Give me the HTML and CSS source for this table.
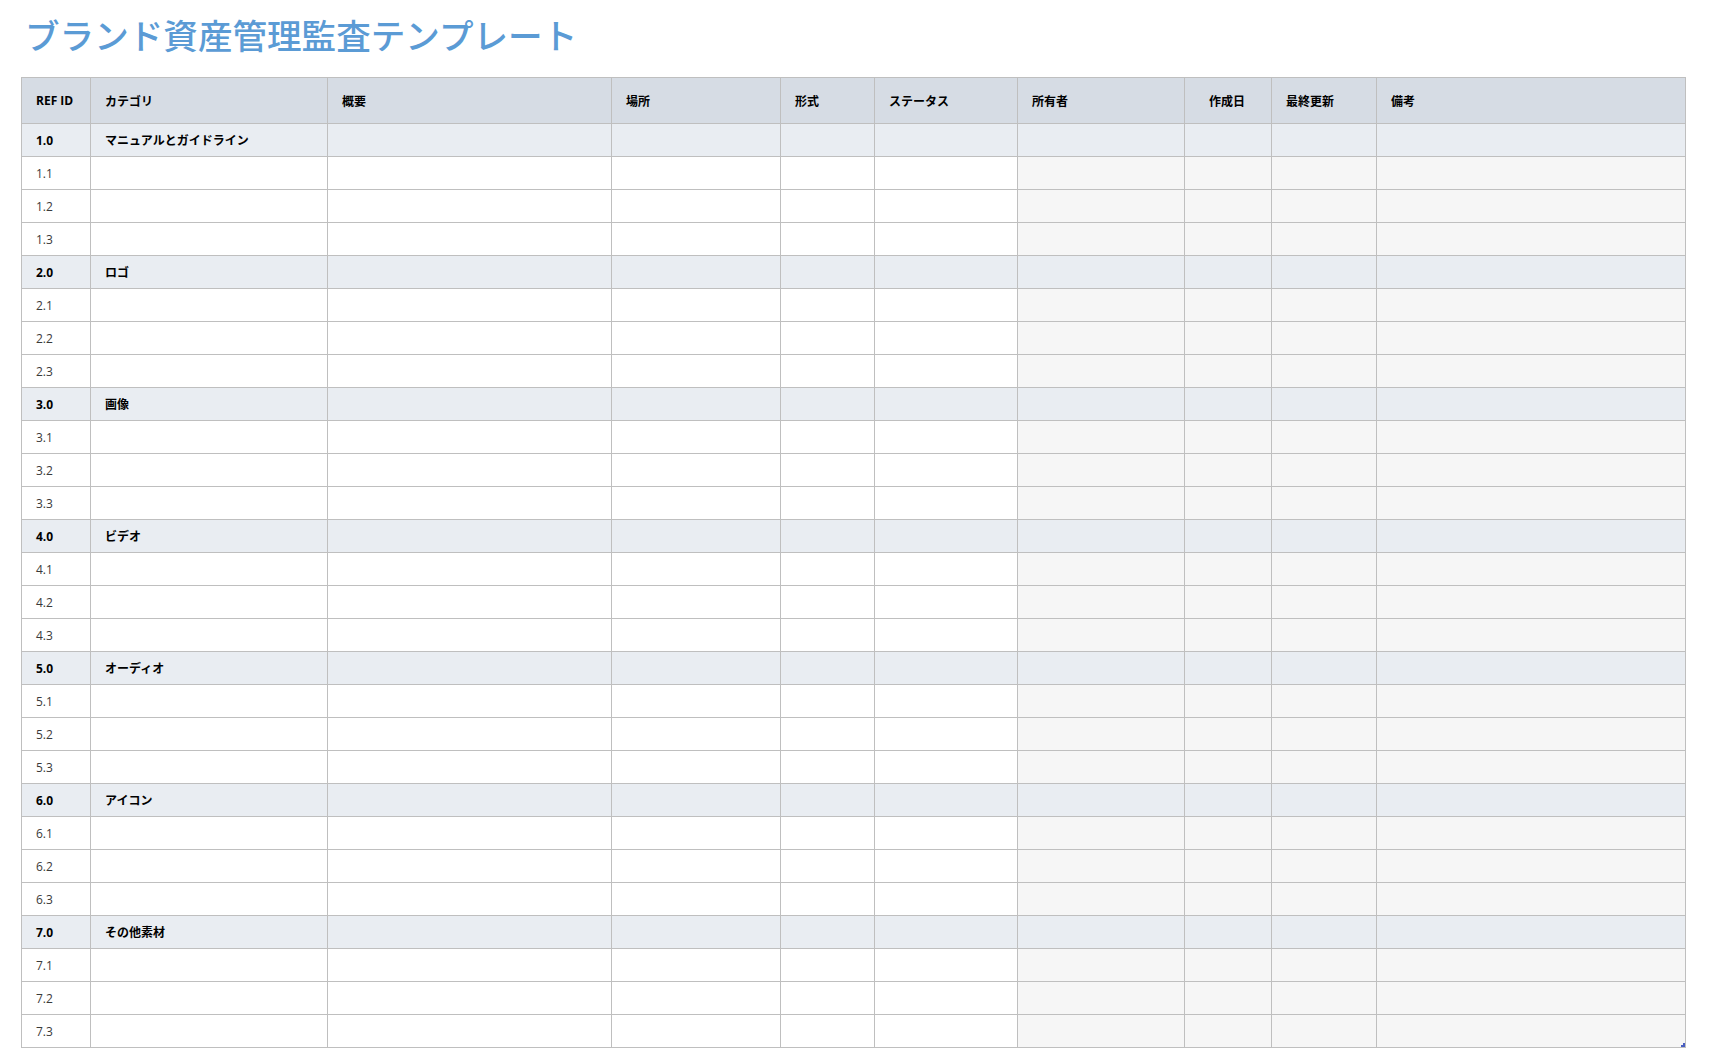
FILE: index.html
```html
<!DOCTYPE html>
<html lang="ja">
<head>
<meta charset="utf-8">
<title>ブランド資産管理監査テンプレート</title>
<link rel="stylesheet" href="styles.css">
</head>
<body>
<div class="page">
  <h1 class="title">ブランド資産管理監査テンプレート</h1>
  <table class="audit">
    <colgroup>
      <col class="c-id"><col class="c-cat"><col class="c-sum"><col class="c-loc"><col class="c-fmt">
      <col class="c-st"><col class="c-own"><col class="c-cre"><col class="c-upd"><col class="c-note">
    </colgroup>
    <thead>
      <tr>
        <th>REF ID</th><th>カテゴリ</th><th>概要</th><th>場所</th><th>形式</th>
        <th>ステータス</th><th>所有者</th><th class="center">作成日</th><th>最終更新</th><th>備考</th>
      </tr>
    </thead>
    <tbody>
      <tr class="group"><td>1.0</td><td>マニュアルとガイドライン</td><td></td><td></td><td></td><td></td><td></td><td></td><td></td><td></td></tr>
      <tr><td>1.1</td><td></td><td></td><td></td><td></td><td></td><td class="g"></td><td class="g"></td><td class="g"></td><td class="g"></td></tr>
      <tr><td>1.2</td><td></td><td></td><td></td><td></td><td></td><td class="g"></td><td class="g"></td><td class="g"></td><td class="g"></td></tr>
      <tr><td>1.3</td><td></td><td></td><td></td><td></td><td></td><td class="g"></td><td class="g"></td><td class="g"></td><td class="g"></td></tr>
      <tr class="group"><td>2.0</td><td>ロゴ</td><td></td><td></td><td></td><td></td><td></td><td></td><td></td><td></td></tr>
      <tr><td>2.1</td><td></td><td></td><td></td><td></td><td></td><td class="g"></td><td class="g"></td><td class="g"></td><td class="g"></td></tr>
      <tr><td>2.2</td><td></td><td></td><td></td><td></td><td></td><td class="g"></td><td class="g"></td><td class="g"></td><td class="g"></td></tr>
      <tr><td>2.3</td><td></td><td></td><td></td><td></td><td></td><td class="g"></td><td class="g"></td><td class="g"></td><td class="g"></td></tr>
      <tr class="group"><td>3.0</td><td>画像</td><td></td><td></td><td></td><td></td><td></td><td></td><td></td><td></td></tr>
      <tr><td>3.1</td><td></td><td></td><td></td><td></td><td></td><td class="g"></td><td class="g"></td><td class="g"></td><td class="g"></td></tr>
      <tr><td>3.2</td><td></td><td></td><td></td><td></td><td></td><td class="g"></td><td class="g"></td><td class="g"></td><td class="g"></td></tr>
      <tr><td>3.3</td><td></td><td></td><td></td><td></td><td></td><td class="g"></td><td class="g"></td><td class="g"></td><td class="g"></td></tr>
      <tr class="group"><td>4.0</td><td>ビデオ</td><td></td><td></td><td></td><td></td><td></td><td></td><td></td><td></td></tr>
      <tr><td>4.1</td><td></td><td></td><td></td><td></td><td></td><td class="g"></td><td class="g"></td><td class="g"></td><td class="g"></td></tr>
      <tr><td>4.2</td><td></td><td></td><td></td><td></td><td></td><td class="g"></td><td class="g"></td><td class="g"></td><td class="g"></td></tr>
      <tr><td>4.3</td><td></td><td></td><td></td><td></td><td></td><td class="g"></td><td class="g"></td><td class="g"></td><td class="g"></td></tr>
      <tr class="group"><td>5.0</td><td>オーディオ</td><td></td><td></td><td></td><td></td><td></td><td></td><td></td><td></td></tr>
      <tr><td>5.1</td><td></td><td></td><td></td><td></td><td></td><td class="g"></td><td class="g"></td><td class="g"></td><td class="g"></td></tr>
      <tr><td>5.2</td><td></td><td></td><td></td><td></td><td></td><td class="g"></td><td class="g"></td><td class="g"></td><td class="g"></td></tr>
      <tr><td>5.3</td><td></td><td></td><td></td><td></td><td></td><td class="g"></td><td class="g"></td><td class="g"></td><td class="g"></td></tr>
      <tr class="group"><td>6.0</td><td>アイコン</td><td></td><td></td><td></td><td></td><td></td><td></td><td></td><td></td></tr>
      <tr><td>6.1</td><td></td><td></td><td></td><td></td><td></td><td class="g"></td><td class="g"></td><td class="g"></td><td class="g"></td></tr>
      <tr><td>6.2</td><td></td><td></td><td></td><td></td><td></td><td class="g"></td><td class="g"></td><td class="g"></td><td class="g"></td></tr>
      <tr><td>6.3</td><td></td><td></td><td></td><td></td><td></td><td class="g"></td><td class="g"></td><td class="g"></td><td class="g"></td></tr>
      <tr class="group"><td>7.0</td><td>その他素材</td><td></td><td></td><td></td><td></td><td></td><td></td><td></td><td></td></tr>
      <tr><td>7.1</td><td></td><td></td><td></td><td></td><td></td><td class="g"></td><td class="g"></td><td class="g"></td><td class="g"></td></tr>
      <tr><td>7.2</td><td></td><td></td><td></td><td></td><td></td><td class="g"></td><td class="g"></td><td class="g"></td><td class="g"></td></tr>
      <tr><td>7.3</td><td></td><td></td><td></td><td></td><td></td><td class="g"></td><td class="g"></td><td class="g"></td><td class="g last"><span class="grip"></span></td></tr>
    </tbody>
  </table>
</div>
</body>
</html>
```

FILE: styles.css
```css
html, body {
  margin: 0;
  padding: 0;
  background: #ffffff;
}

body {
  font-family: "Open Sans", "Noto Sans CJK JP", sans-serif;
  color: #000000;
}

.page {
  padding: 17px 0 0 21px;
}

.title {
  margin: 0;
  padding-left: 4px;
  font-family: "Noto Sans CJK JP", sans-serif;
  font-size: 34.6px;
  line-height: 34px;
  font-weight: 500;
  color: #5b9bd5;
  letter-spacing: 0;
}

.audit {
  margin-top: 26px;
  width: 1665px;
  table-layout: fixed;
  border-collapse: separate;
  border-spacing: 0;
  border-left: 1px solid #bfbfbf;
  border-top: 1px solid #bfbfbf;
}

.c-id { width: 69px; }
.c-cat { width: 237px; }
.c-sum { width: 284px; }
.c-loc { width: 169px; }
.c-fmt { width: 94px; }
.c-st { width: 143px; }
.c-own { width: 167px; }
.c-cre { width: 87px; }
.c-upd { width: 105px; }
.c-note { width: 309px; }

.audit th,
.audit td {
  box-sizing: border-box;
  border-right: 1px solid #bfbfbf;
  border-bottom: 1px solid #bfbfbf;
  padding: 0 0 0 14px;
  font-size: 12px;
  text-align: left;
  vertical-align: middle;
  white-space: nowrap;
  overflow: hidden;
}

.audit th {
  height: 46px;
  background: #d6dce4;
  font-weight: 700;
}

.audit th.center {
  text-align: center;
  padding: 0 2px 0 0;
}

.audit td {
  height: 33px;
  background: #ffffff;
  color: #3a3a3a;
  font-weight: 400;
}

.audit td.g {
  background: #f6f6f6;
}

.audit tr.group td {
  background: #e9edf2;
  color: #000000;
  font-weight: 700;
}

.audit td.last {
  position: relative;
}

.grip {
  position: absolute;
  right: 0;
  bottom: 0;
  width: 4px;
  height: 4px;
  background: linear-gradient(to bottom, transparent 0 2px, #4a5fc1 2px 4px),
              linear-gradient(to right, transparent 0 2px, #4a5fc1 2px 4px);
}
```
